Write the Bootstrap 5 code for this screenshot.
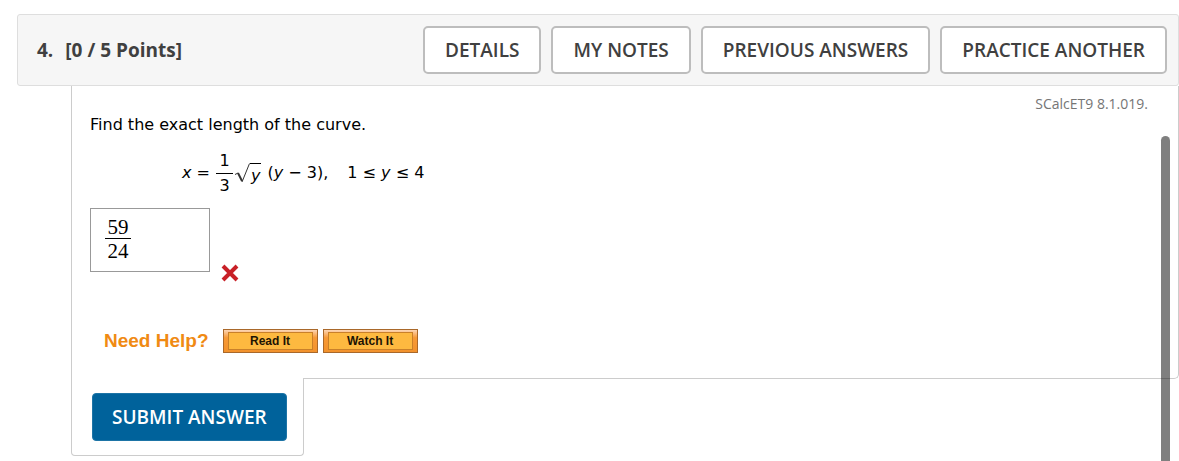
<!DOCTYPE html>
<html lang="en">
<head>
<meta charset="utf-8">
<meta name="viewport" content="width=device-width, initial-scale=1">
<title>Question 4</title>
<link rel="stylesheet" href="https://cdn.jsdelivr.net/npm/bootstrap@5.3.0/dist/css/bootstrap.min.css">
<style>
body { font-family: "Open Sans", sans-serif; color: #404040; background: #fff; }
.page { min-height: 100vh; padding: 14px 0 0 17px; }
.question-head { background: #f6f6f6; border: 1px solid #dedede; border-radius: 3px; padding: 11px 11px 11px 19px; }
.question-title { font-size: 19px; line-height: 24px; font-weight: 700; gap: 12px; }
.tools { gap: 10px; }
.btn-tool { font-size: 19px; line-height: 24px; font-weight: 600; color: #404040; background: #fff; border: 2px solid #bdbdbd; border-radius: 5px; padding: 10px 20px; }
.question-body { margin-left: 54px; border: 1px solid #ccc; border-top: 0; border-bottom-right-radius: 5px; padding: 8px 30px 25px 18px; }
.source { font-size: 14px; line-height: 20px; color: #757575; }
.prompt { font-family: Verdana, "DejaVu Sans", sans-serif; color: #000; font-size: 16px; line-height: 22px; }
.formula { margin: 12px 0 0 92px; height: 50px; gap: 6px; white-space: nowrap; }
.fraction { line-height: 24px; text-align: center; }
.fraction > :first-child { border-bottom: 1px solid currentColor; }
.formula .fraction > span { width: 17px; }
.root { margin-left: -5px; }
.radicand { border-top: 1px solid #000; line-height: 18px; padding: 3px 1px 0; margin-top: 1px; }
.answer-row { margin-top: 10px; }
.answer-box { width: 120px; height: 64px; border: 1px solid #999; padding: 8px 14px; color: #000; font-family: "Liberation Serif", serif; font-size: 21px; }
.answer-box .fraction > span { width: 26px; line-height: 21px; }
.answer-box .fraction > :last-child { padding-top: 2px; }
.wrong-mark { margin-bottom: -13px; }
.help { margin: 57px 0 0 14px; gap: 5px; }
.help-label { font: 700 19px/24px "Liberation Sans", Arial, sans-serif; color: #f08a13; margin-right: 9px; }
.btn-help { width: 95px; height: 24px; padding: 2px 4px; border: 1px solid #a9682a; background: linear-gradient(#fcd5b4, #f79a38 35%, #f2922c); font: 700 12px/14px "Liberation Sans", Arial, sans-serif; color: #1c1403; }
.btn-help span { display: block; background: #fdb940; border: 1px solid #c98029; line-height: 16px; }
.submit-box { width: fit-content; margin: -1px 0 0 54px; background: #fff; border: 1px solid #ccc; border-top: 0; border-radius: 0 0 4px 4px; padding: 15px 16px 14px 20px; }
.btn-submit { font-size: 19px; line-height: 24px; font-weight: 600; color: #fff; background: #00629b; border: 1px solid #1d74a6; border-radius: 4px; padding: 11px 19px; }
.scroll-thumb { position: absolute; right: 9px; top: 136px; bottom: 0; width: 9px; border-radius: 5px 5px 0 0; background: rgba(0,0,0,.5); }
</style>
<script src="https://cdn.jsdelivr.net/npm/bootstrap@5.3.0/dist/js/bootstrap.bundle.min.js" defer></script>
</head>
<body>
<main class="page position-relative">
  <header class="question-head d-flex flex-wrap align-items-center justify-content-between">
    <h1 class="question-title d-flex m-0"><span>4.</span><span>[0 / 5 Points]</span></h1>
    <div class="tools d-flex flex-wrap">
      <button class="btn btn-tool" type="button">DETAILS</button>
      <button class="btn btn-tool" type="button">MY NOTES</button>
      <button class="btn btn-tool" type="button">PREVIOUS ANSWERS</button>
      <button class="btn btn-tool" type="button">PRACTICE ANOTHER</button>
    </div>
  </header>
  <section class="question-body">
    <div class="source text-end">SCalcET9 8.1.019.</div>
    <p class="prompt m-0">Find the exact length of the curve.</p>
    <div class="prompt formula d-flex align-items-center">
      <span><i>x</i> =</span>
      <span class="fraction d-flex flex-column"><span>1</span><span>3</span></span>
      <span class="root d-flex">
        <svg width="16" height="22" viewBox="0 0 16 22" fill="none" stroke="#333" aria-hidden="true"><path d="M1 12.5l3-1.5"/><path d="M4 11l4 8" stroke-width="2"/><path d="M8 20L15.500 1.500"/></svg>
        <span class="radicand"><i>y</i></span>
      </span>
      <span>(<i>y</i> − 3),</span>
      <span class="ms-2">&nbsp;1 ≤ <i>y</i> ≤ 4</span>
    </div>
    <div class="answer-row d-flex align-items-end">
      <div class="answer-box" role="textbox" tabindex="0" aria-label="Answer">
        <span class="fraction d-flex flex-column"><span>59</span><span>24</span></span>
      </div>
      <svg class="wrong-mark ms-2" width="24" height="24" viewBox="0 0 24 24" role="img" aria-label="Incorrect"><path d="M5 5l14 14M19 5l-14 14" stroke="#c82027" stroke-width="4"/></svg>
    </div>
    <div class="help d-flex align-items-center">
      <span class="help-label">Need Help?</span>
      <button class="btn-help" type="button"><span>Read It</span></button>
      <button class="btn-help" type="button"><span>Watch It</span></button>
    </div>
  </section>
  <div class="submit-box position-relative">
    <button class="btn btn-submit d-block" type="submit">SUBMIT ANSWER</button>
  </div>
  <div class="scroll-thumb"></div>
</main>
</body>
</html>
